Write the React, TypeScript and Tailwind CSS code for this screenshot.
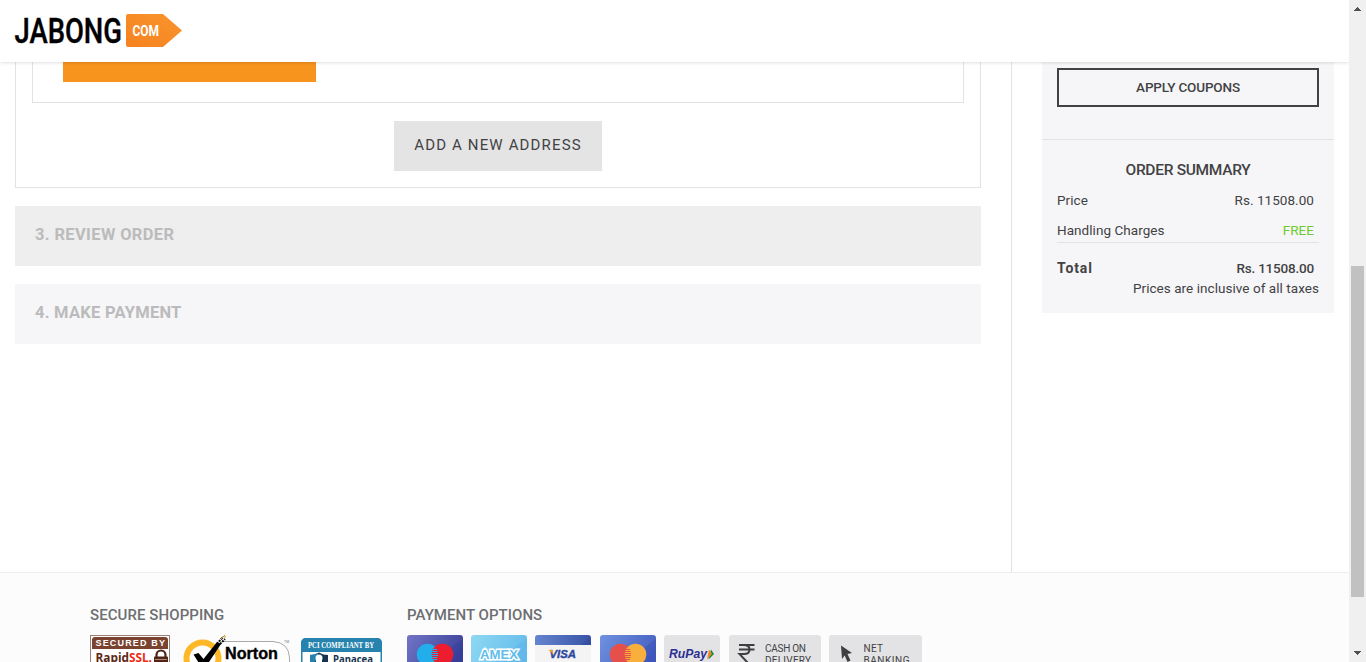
import React from "react";

function Logo() {
  return (
    <svg width="170" height="36" viewBox="0 0 170 36" overflow="visible" aria-label="Jabong.com">
      <defs>
        <linearGradient id="tag" x1="0" y1="1" x2="1" y2="0">
          <stop offset="0" stopColor="#f5821f" />
          <stop offset="1" stopColor="#f9952c" />
        </linearGradient>
      </defs>
      <text x="-0.5" y="29.800" fontFamily="Roboto, sans-serif" fontWeight="500" fontSize="34.5" textLength="107.500" lengthAdjust="spacingAndGlyphs" fill="#000" stroke="#000" strokeWidth=".4">JABONG</text>
      <path d="M113 1H148L167 17.5 148 34H113a2 2 0 0 1-2-2V3a2 2 0 0 1 2-2Z" fill="url(#tag)" />
      <text x="117.500" y="22.500" fontFamily="Roboto, sans-serif" fontWeight="700" fontSize="15.5" textLength="26.500" lengthAdjust="spacingAndGlyphs" fill="#fff">COM</text>
    </svg>
  );
}

function RapidSsl() {
  return (
    <svg width="80" height="44" viewBox="0 0 80 44">
      <rect x=".5" y=".5" width="79" height="50" fill="#fff" stroke="#9c8078" />
      <path d="M2 14V5a3 3 0 0 1 3-3H75a3 3 0 0 1 3 3V14Z" fill="#79432f" />
      <text x="5.500" y="11.200" fontFamily="Liberation Sans, sans-serif" fontWeight="700" fontSize="9" textLength="69.500" fill="#fff">SECURED BY</text>
      <text x="5.500" y="27" fontFamily="Open Sans, sans-serif" fontWeight="700" fontSize="12" textLength="56.500" lengthAdjust="spacingAndGlyphs" fill="#5b2716">Rapid<tspan fill="#f02b12">SSL.</tspan></text>
      <path d="M66.500 22V20a4.500 4.500 0 0 1 9 0V22" fill="none" stroke="#4f2416" strokeWidth="2.200" />
      <rect x="64" y="21.500" width="14" height="12" rx="1" fill="#4f2416" />
      <path d="M65 24.500H77" stroke="#b18b75" />
    </svg>
  );
}

function Norton() {
  return (
    <svg width="108" height="44" viewBox="0 0 108 44" overflow="visible">
      <path d="M40 6.500H90Q106 7.500 106.500 23V44H20" fill="#fff" stroke="#a9a9a9" />
      <circle cx="19.500" cy="23.500" r="16" fill="#fff" stroke="#fdb827" strokeWidth="6" />
      <path d="M10.500 19.500 15.500 18 20.500 24 34 7 38 9 22 33H19Z" fill="#000" />
      <path d="M34 9 40 2M37 9 42 4" stroke="#000" strokeWidth="2" strokeDasharray="2 1" />
      <path d="M38 4 42 0M41 2H43" stroke="#c49a21" strokeWidth="1" />
      <text x="42" y="23.500" fontFamily="Liberation Sans, sans-serif" fontWeight="700" fontSize="17" textLength="53" lengthAdjust="spacingAndGlyphs" fill="#000" stroke="#000" strokeWidth=".4">Norton</text>
      <text x="101" y="8" fontFamily="Liberation Sans, sans-serif" fontSize="3.500" fill="#777">TM</text>
    </svg>
  );
}

function Panacea() {
  return (
    <svg width="81" height="40" viewBox="0 0 81 40">
      <rect x=".75" y=".75" width="79.500" height="50" rx="4" fill="#fff" stroke="#2683ad" strokeWidth="1.500" />
      <path d="M0 14V5a5 5 0 0 1 5-5H76a5 5 0 0 1 5 5V14Z" fill="#2683ad" />
      <text x="7" y="9.500" fontFamily="Liberation Serif, serif" fontWeight="700" fontSize="7.500" textLength="66" lengthAdjust="spacingAndGlyphs" fill="#fff">PCI COMPLIANT BY</text>
      <path d="M9 17Q14 17 18 14.500 22 17 27 17V30H9Z" fill="#17344f" />
      <path d="M9 17Q14 17 17 15V22L9 26Z" fill="#2683ad" />
      <circle cx="18" cy="20" r="3.500" fill="#fff" />
      <path d="M15 22H21V30H15Z" fill="#fff" />
      <text x="32" y="25" fontFamily="Open Sans, sans-serif" fontWeight="700" fontSize="10.500" textLength="40" lengthAdjust="spacingAndGlyphs" fill="#17344f">Panacea</text>
    </svg>
  );
}

function OverlapCard({ id, from, to, left, right }: { id: string; from: string; to: string; left: string; right: string }) {
  return (
    <svg width="56" height="36" viewBox="0 0 56 36">
      <defs>
        <linearGradient id={id} x1="0" y1="0" x2="1" y2=".4">
          <stop offset="0" stopColor={from} />
          <stop offset="1" stopColor={to} />
        </linearGradient>
      </defs>
      <rect width="56" height="36" rx="3" fill={`url(#${id})`} />
      <path d="M56 4V36H12Z" fill="#1c2fa0" opacity=".18" />
      <circle cx="20.500" cy="19.500" r="10.800" fill={left} />
      <circle cx="35.500" cy="19.500" r="10.800" fill={right} />
      <path d="M25.500 14.500H30M25 16.500H30.500M24.700 18.500H31M25 20.500H31M25 22.500H30.500M25.500 24.500H30" stroke={left} strokeWidth="1" />
    </svg>
  );
}

function Amex() {
  return (
    <svg width="56" height="36" viewBox="0 0 56 36">
      <defs>
        <linearGradient id="amex" x1="0" y1="0" x2="1" y2=".3">
          <stop offset="0" stopColor="#8ed8f2" />
          <stop offset="1" stopColor="#66bdec" />
        </linearGradient>
      </defs>
      <rect width="56" height="36" rx="3" fill="url(#amex)" />
      <path d="M56 3V36H12Z" fill="#58b3e9" opacity=".4" />
      <text x="9" y="24" fontFamily="Liberation Sans, sans-serif" fontWeight="700" fontSize="12.500" textLength="38" lengthAdjust="spacingAndGlyphs" fill="#62bdeb" stroke="#fff" strokeWidth="2.800" paintOrder="stroke">AMEX</text>
    </svg>
  );
}

function Visa() {
  return (
    <svg width="56" height="36" viewBox="0 0 56 36">
      <defs>
        <linearGradient id="visa">
          <stop offset="0" stopColor="#6585d0" />
          <stop offset="1" stopColor="#3853a5" />
        </linearGradient>
      </defs>
      <rect width="56" height="36" rx="3" fill="#f4f4f5" />
      <path d="M0 10V3a3 3 0 0 1 3-3H53a3 3 0 0 1 3 3V10Z" fill="url(#visa)" />
      <path d="M56 3V10H46Z" fill="#304a9b" opacity=".6" />
      <text x="14.500" y="23" fontFamily="Liberation Sans, sans-serif" fontStyle="italic" fontWeight="700" fontSize="11.500" textLength="26.500" lengthAdjust="spacingAndGlyphs" fill="#2f4a9c" stroke="#2f4a9c" strokeWidth=".4">VISA</text>
      <path d="M13 15H17.500L18.500 20Q17 16.500 13 15Z" fill="#f5a623" />
    </svg>
  );
}

function RuPay() {
  return (
    <svg width="56" height="36" viewBox="0 0 56 36">
      <rect width="56" height="36" rx="3" fill="#e3e3e5" />
      <text x="5" y="23" fontFamily="Liberation Sans, sans-serif" fontStyle="italic" fontWeight="700" fontSize="12" textLength="38" lengthAdjust="spacingAndGlyphs" fill="#2d3092">RuPay</text>
      <path d="M47 14.500 50 19 44.500 24.500Z" fill="#118a4a" />
      <path d="M45 14.500 48 19 43 24.500Z" fill="#f58220" />
    </svg>
  );
}

function CashOnDelivery() {
  return (
    <svg width="92" height="36" viewBox="0 0 92 36">
      <rect width="92" height="36" rx="3" fill="#e3e3e5" />
      <path d="M10 10H25.500M10 14.500H25.500M10 10H15Q20.500 10 20.500 14.500T15 19H10.500L19 28" fill="none" stroke="#3f3f41" strokeWidth="2" />
      <g fontFamily="Roboto, sans-serif" fontSize="10" fill="#424244">
        <text x="36" y="16.500" textLength="41">CASH ON</text>
        <text x="36" y="29" textLength="46">DELIVERY</text>
      </g>
    </svg>
  );
}

function NetBanking() {
  return (
    <svg width="93" height="36" viewBox="0 0 93 36">
      <rect width="93" height="36" rx="3" fill="#e3e3e5" />
      <path d="M12 10.500 23 18 18.500 19 21.500 25.500 18.500 27 15.700 20.500 13 24Z" fill="#3f3f41" />
      <g fontFamily="Roboto, sans-serif" fontSize="10" fill="#424244">
        <text x="34.500" y="16.500" textLength="19.500">NET</text>
        <text x="34.500" y="29" textLength="46">BANKING</text>
      </g>
    </svg>
  );
}

function Scrollbar() {
  return (
    <div className="flex h-full w-[17px] flex-col items-center bg-[#f0f0f0]">
      <svg className="mt-[7px] h-1 w-[7px] shrink-0" viewBox="0 0 7 4" shapeRendering="crispEdges">
        <path d="M3 0H4V1H5V2H6V3H7V4H0V3H1V2H2V1H3Z" fill="#505050" />
      </svg>
      <div className="mt-[255px] h-[331px] w-[13px] bg-[#c1c1c1]" />
      <svg className="mt-[54px] h-1 w-[7px] shrink-0" viewBox="0 0 7 4" shapeRendering="crispEdges">
        <path d="M0 0H7V1H6V2H5V3H4V4H3V3H2V2H1V1H0Z" fill="#505050" />
      </svg>
    </div>
  );
}

export default function App() {
  return (
    <div className="flex h-[662px] w-[1366px] overflow-hidden bg-white font-['Roboto',sans-serif] text-[#424244]">
      <div className="flex h-full w-[1349px] flex-col overflow-hidden">
        <header className="z-10 h-[62px] shrink-0 bg-white pt-[13px] pl-[15px] shadow-[0_1px_3px_rgba(0,0,0,0.13)]">
          <Logo />
        </header>

        <main className="flex h-[510px] shrink-0 pl-[15px]">
          <section className="w-[966px]">
            <div className="flex h-[126px] flex-col items-center border-x border-b border-[#e3e3e3]">
              <div className="h-[41px] w-[932px] border-x border-b border-[#e3e3e3] pl-[30px]">
                <div className="h-5 w-[253px] bg-[#f7941e]" />
              </div>
              <button className="mt-[18px] h-[50px] w-[208px] bg-[#e4e4e4] pb-px text-[15px] tracking-[1.15px] whitespace-nowrap">ADD A NEW ADDRESS</button>
            </div>
            <h2 className="mt-[18px] h-[60px] bg-[#eeeeee] pl-5 text-[16.5px] leading-[57px] font-bold tracking-[0.35px] text-[#bbbbbb]">3. REVIEW ORDER</h2>
            <h2 className="mt-[18px] h-[60px] bg-[#f6f6f8] pl-5 text-[16.5px] leading-[57px] font-bold tracking-[0.25px] text-[#bbbbbb]">4. MAKE PAYMENT</h2>
          </section>

          <div className="ml-[30px] w-px bg-[#e3e3e3]" />

          <aside className="ml-[30px] h-[251px] w-[292px] bg-[#f6f6f8] pt-1.5 text-[13.5px] tracking-[0.05px]">
            <div className="h-[72px] border-b border-[#e3e3e3] px-[15px]">
              <button className="h-[39px] w-full border-2 border-[#424244] pb-px text-[13.5px] font-medium tracking-[-0.17px]">APPLY COUPONS</button>
            </div>
            <div className="px-[15px] pt-5">
              <h3 className="text-center text-[15.5px] leading-5 font-medium tracking-[-0.3px]">ORDER SUMMARY</h3>
              <div className="mt-[11px] flex h-5 justify-between pr-[5px] leading-[19px]">
                <span>Price</span>
                <span>Rs. 11508.00</span>
              </div>
              <div className="mt-2.5 flex h-[22px] justify-between border-b border-[#e3e3e3] pr-[5px] leading-[19px]">
                <span>Handling Charges</span>
                <span className="text-[#6ccb2e]">FREE</span>
              </div>
              <div className="mt-[15px] flex h-[21px] justify-between pr-[5px] leading-5">
                <span className="text-[14px] font-bold tracking-[0.9px]">Total</span>
                <span className="font-medium tracking-[-0.2px]">Rs. 11508.00</span>
              </div>
              <p className="text-right leading-[19px]">Prices are inclusive of all taxes</p>
            </div>
          </aside>
        </main>

        <footer className="flex h-[90px] shrink-0 border-t border-[#eeeeee] bg-[#fcfcfc] pt-8 pl-[90px]">
          <section className="w-[317px]">
            <h4 className="text-[15px] leading-5 font-medium tracking-[0.08px] text-[#6d6e71]">SECURE SHOPPING</h4>
            <div className="mt-2.5 flex items-start">
              <RapidSsl />
              <div className="ml-[13px]"><Norton /></div>
              <div className="mt-[3px] ml-[10px]"><Panacea /></div>
            </div>
          </section>
          <section>
            <h4 className="text-[15px] leading-5 font-medium tracking-[0.04px] text-[#6d6e71]">PAYMENT OPTIONS</h4>
            <div className="mt-2.5 flex items-start gap-2">
              <OverlapCard id="maestro" from="#7275c6" to="#3c4399" left="#22aeea" right="#ed1c2e" />
              <Amex />
              <Visa />
              <div className="ml-px"><OverlapCard id="mastercard" from="#6f92df" to="#4660c1" left="#e5504a" right="#f9af3c" /></div>
              <RuPay />
              <div className="ml-px"><CashOnDelivery /></div>
              <NetBanking />
            </div>
          </section>
        </footer>
      </div>
      <Scrollbar />
    </div>
  );
}
